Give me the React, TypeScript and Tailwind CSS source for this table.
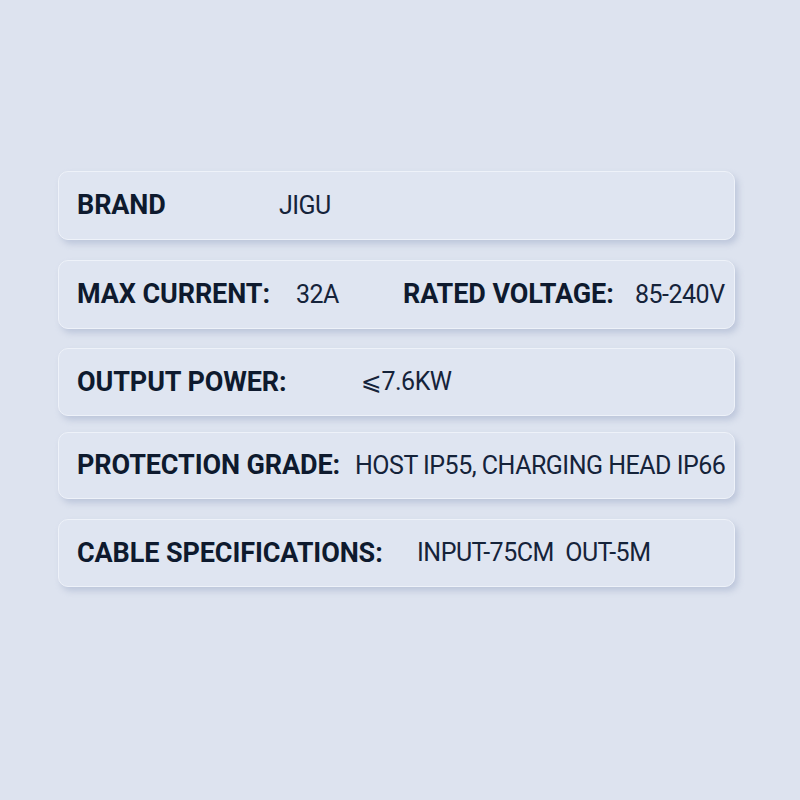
type Cell = { label: string; value: string; labelW: string; valueW?: string };

const rows: { cells: Cell[]; box: string }[] = [
  { cells: [{ label: "BRAND", value: "JIGU", labelW: "w-[202px]" }], box: "mt-[171px] h-[69px]" },
  {
    cells: [
      { label: "MAX CURRENT:", value: "32A", labelW: "w-[219px]", valueW: "w-[107px]" },
      { label: "RATED VOLTAGE:", value: "85-240V", labelW: "w-[232px]" },
    ],
    box: "mt-[20px] h-[69px]",
  },
  { cells: [{ label: "OUTPUT POWER:", value: "⩽7.6KW", labelW: "w-[284px]" }], box: "mt-[19px] h-[68px]" },
  {
    cells: [{ label: "PROTECTION GRADE:", value: "HOST IP55, CHARGING HEAD IP66", labelW: "w-[278px]" }],
    box: "mt-[16px] h-[67px]",
  },
  {
    cells: [{ label: "CABLE SPECIFICATIONS:", value: "INPUT-75CM\u00a0\u00a0OUT-5M", labelW: "w-[340px]" }],
    box: "mt-[20px] h-[68px]",
  },
];

export default function App() {
  return (
    <div
      className="w-[800px] h-[800px] bg-[#dde3ef] flex flex-col text-[#0e1a2e]"
      style={{ fontFamily: "Roboto, 'DejaVu Sans', sans-serif" }}
    >
      {rows.map((row, i) => (
        <div
          key={i}
          className={`${row.box} ml-[58px] w-[677px] shrink-0 rounded-[10px] bg-[#dfe5f1] border border-[#eef2f9] shadow-[3px_4px_6px_rgba(150,165,195,0.45)] flex items-center pl-[18px]`}
        >
          {row.cells.map((c, j) => (
            <div key={j} className="flex items-center">
              <span className={`${c.labelW} shrink-0 text-[27px] font-bold tracking-[-0.1px] whitespace-nowrap`}>
                {c.label}
              </span>
              <span
                className={`${c.valueW ?? ""} shrink-0 text-[25px] font-normal text-[#15233a] tracking-[-0.5px] whitespace-nowrap`}
              >
                {c.value}
              </span>
            </div>
          ))}
        </div>
      ))}
    </div>
  );
}
